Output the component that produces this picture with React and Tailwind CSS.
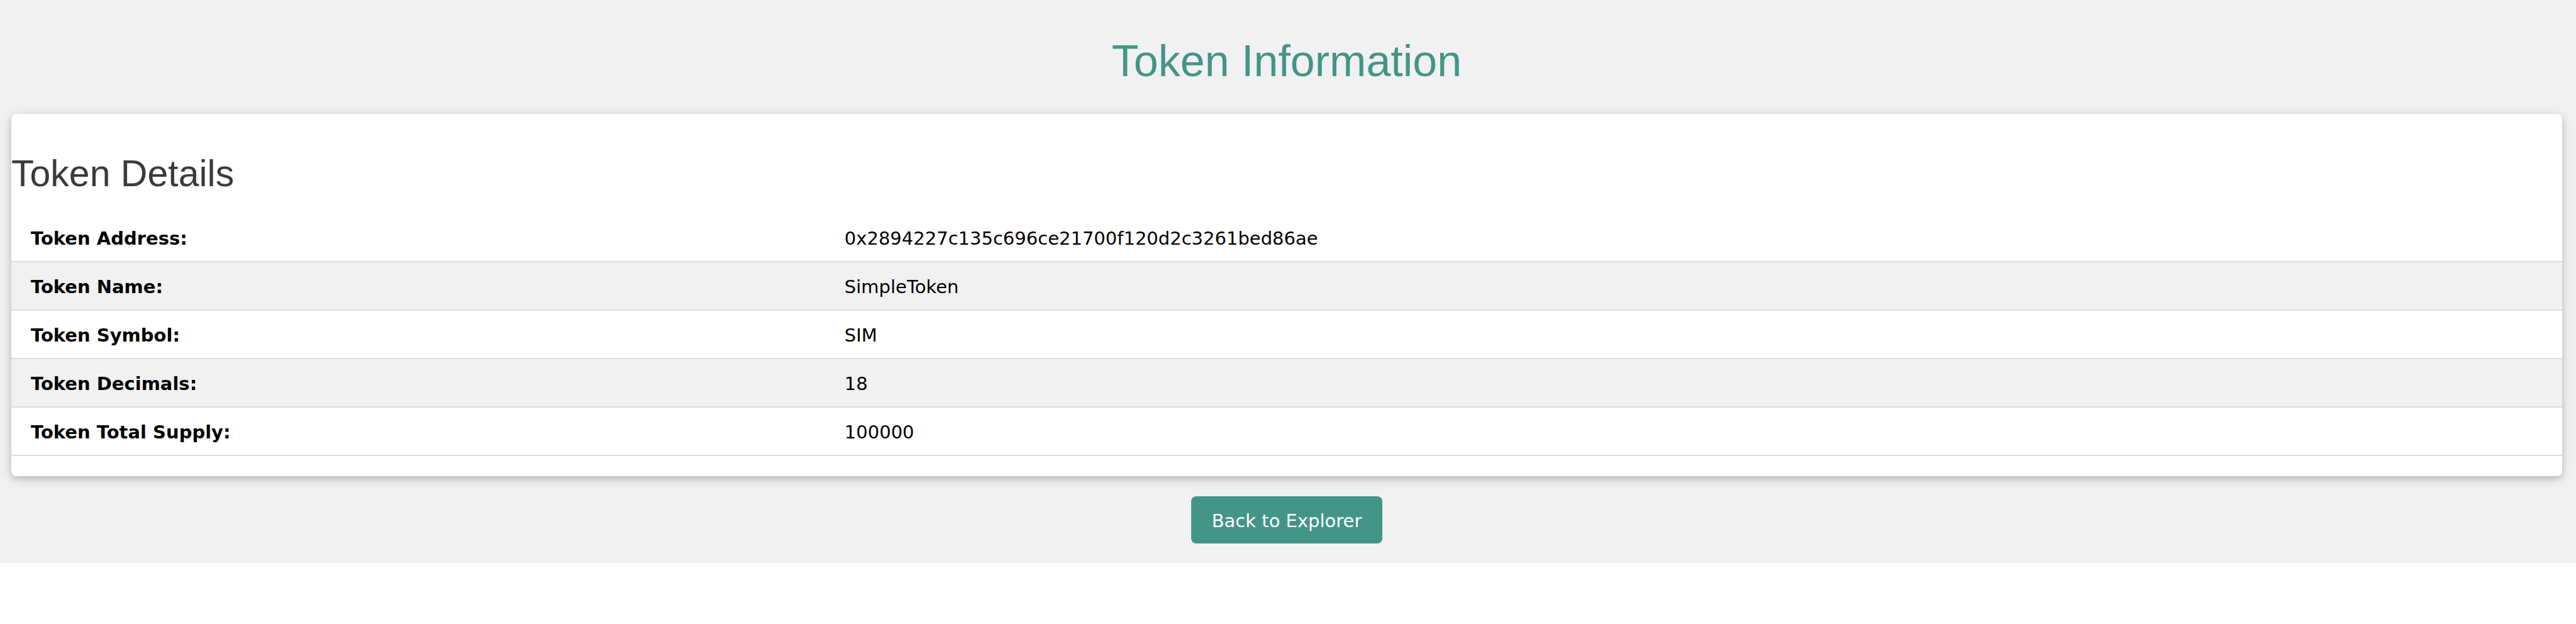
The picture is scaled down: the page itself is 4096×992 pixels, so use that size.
const details = [
  { label: "Token Address:", value: "0x2894227c135c696ce21700f120d2c3261bed86ae" },
  { label: "Token Name:", value: "SimpleToken" },
  { label: "Token Symbol:", value: "SIM" },
  { label: "Token Decimals:", value: "18" },
  { label: "Token Total Supply:", value: "100000" },
];

function DetailsTable() {
  return (
    <table className="w-full border-collapse text-left" aria-labelledby="details-heading">
      <tbody>
        {details.map(({ label, value }) => (
          <tr key={label} className="border-b-2 border-[#dddddd] even:bg-[#f1f1f1]">
            <th scope="row" className="w-[31.9%] px-[31px] pt-[18px] pb-[14px] font-bold">
              {label}
            </th>
            <td className="px-[31px] pt-[18px] pb-[14px]">{value}</td>
          </tr>
        ))}
      </tbody>
    </table>
  );
}

export default function App() {
  return (
    <main className="flex flex-col items-center bg-[#f1f1f1] pt-11 pr-[22px] pb-[31px] pl-[18px] font-[Verdana,'DejaVu_Sans',sans-serif] text-[29px] leading-[43px] text-black">
      <h1 className="mb-[31px] font-['Liberation_Sans',Arial,sans-serif] text-[70px] leading-[106px] text-[#439588]">
        Token Information
      </h1>
      <section className="w-full rounded-lg bg-white pt-[51px] pb-8 shadow-[0_4px_10px_0_rgba(0,0,0,0.16),0_4px_20px_0_rgba(0,0,0,0.12)]">
        <h2
          id="details-heading"
          className="mb-5 font-['Liberation_Sans',Arial,sans-serif] text-[59px] leading-[88px] text-[#3a3a3a]"
        >
          Token Details
        </h2>
        <DetailsTable />
      </section>
      <a href="#explorer" className="mt-8 rounded-lg bg-[#439588] px-[33px] pt-[18px] pb-[14px] text-white">
        Back to Explorer
      </a>
    </main>
  );
}
